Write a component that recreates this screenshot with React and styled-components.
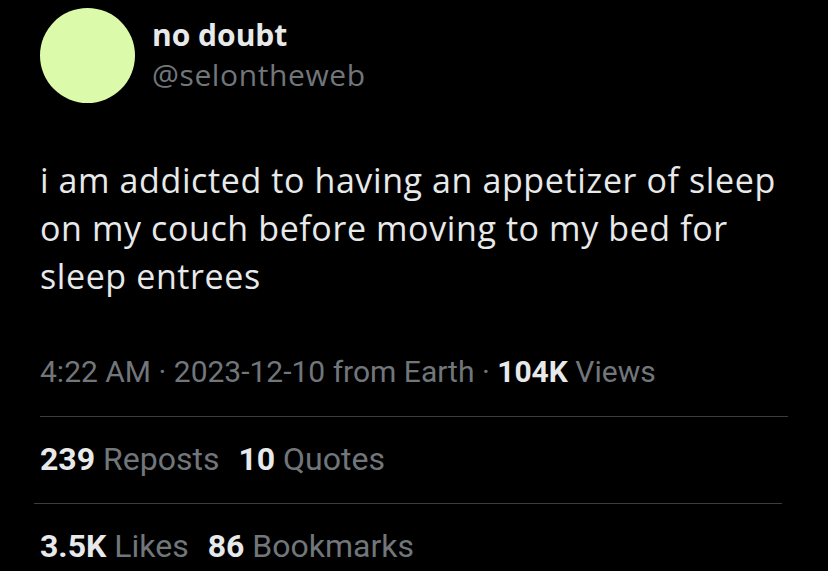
import styled, { createGlobalStyle } from "styled-components";

const Global = createGlobalStyle`
    html, body {
        margin: 0;
        padding: 0;
        background: #000;
    }
    * {
        box-sizing: border-box;
    }
`

export default function App() {
    return (
        <Page>
            <Global />
            <Header>
                <Avatar />
                <Names>
                    <Name>no doubt</Name>
                    <Handle>@selontheweb</Handle>
                </Names>
            </Header>
            <Body>
                i am addicted to having an appetizer of sleep on my couch before moving to my bed for sleep entrees
            </Body>
            <Meta>
                4:22 AM · 2023-12-10 from Earth · <b>104K</b> Views
            </Meta>
            <Divider />
            <Stats>
                <Stat><b>239</b> Reposts</Stat>
                <Stat><b>10</b> Quotes</Stat>
            </Stats>
            <Divider $shift={-6} />
            <Stats>
                <Stat><b>3.5K</b> Likes</Stat>
                <Stat><b>86</b> Bookmarks</Stat>
            </Stats>
        </Page>
    )
}

const Page = styled.div`
    width: 828px;
    height: 571px;
    overflow: hidden;
    background: #000;
    padding: 8px 40px 0 40px;
    font-family: "Open Sans", "Noto Sans", sans-serif;
    color: #e7e9ea;
`

const Header = styled.div`
    display: flex;
    align-items: flex-start;
    gap: 17px;
`

const Avatar = styled.div`
    width: 95px;
    height: 95px;
    border-radius: 50%;
    background: #dcfbaa;
    flex-shrink: 0;
`

const Names = styled.div`
    display: flex;
    flex-direction: column;
    padding-top: 7px;
`

const Name = styled.div`
    font-weight: 700;
    font-size: 30px;
    line-height: 40px;
    color: #e7e9ea;
`

const Handle = styled.div`
    font-size: 30px;
    line-height: 40px;
    color: #71767b;
    letter-spacing: 0.6px;
`

const Body = styled.p`
    margin: 53px 0 0 0;
    font-size: 34px;
    line-height: 48px;
    color: #e7e9ea;
    letter-spacing: 0.6px;
    width: 740px;
`

const Meta = styled.div`
    margin-top: 54px;
    font-family: Roboto, "Liberation Sans", sans-serif;
    font-size: 30px;
    line-height: 36px;
    color: #71767b;

    b {
        color: #e7e9ea;
        font-weight: 700;
    }
`

const Divider = styled.hr`
    border: none;
    border-top: 1px solid #3a3d40;
    margin: 26px 0 0 ${(p) => p.$shift || 0}px;
    width: 748px;
`

const Stats = styled.div`
    display: flex;
    gap: 19px;
    margin-top: 24px;
    font-family: Roboto, "Liberation Sans", sans-serif;
    font-size: 32px;
    line-height: 36px;
    color: #71767b;
`

const Stat = styled.span`
    b {
        color: #e7e9ea;
        font-weight: 700;
    }
`
